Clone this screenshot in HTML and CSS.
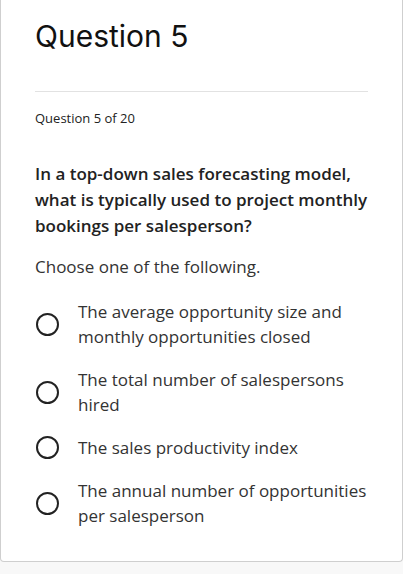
FILE: index.html
```html
<!DOCTYPE html>
<html lang="en">
<head>
    <meta charset="UTF-8">
    <meta name="viewport" content="width=device-width, initial-scale=1.0">
    <title>Question 5</title>
<link rel="stylesheet" href="styles.css">
</head>
<body>
    <div class="card">
        <h1 class="title">Question 5</h1>
        <div class="count">Question 5 of 20</div>

        <p class="prompt">In a top-down sales forecasting model, what is typically used to project monthly bookings per salesperson?</p>
        <p class="hint">Choose one of the following.</p>

        <ul class="options">
            <li class="option">
                <span class="radio"></span>
                <span class="label">The average opportunity size and monthly opportunities closed</span>
            </li>
            <li class="option">
                <span class="radio"></span>
                <span class="label">The total number of salespersons hired</span>
            </li>
            <li class="option">
                <span class="radio"></span>
                <span class="label">The sales productivity index</span>
            </li>
            <li class="option">
                <span class="radio"></span>
                <span class="label">The annual number of opportunities per salesperson</span>
            </li>
        </ul>
    </div>
</body>
</html>
```

FILE: styles.css
```css
body{
    margin: 0;
    background-color: #f8f8f8;
    font-family: "Open Sans", "Noto Sans", sans-serif;
    color: #222;
}
.card{
    background-color: #fff;
    border: 1px solid #cfcfcf;
    border-top: none;
    border-radius: 0 0 4px 4px;
    height: 562px;
    box-sizing: border-box;
    padding: 0 34px;
}
.title{
    margin: 0;
    padding: 18px 0 37px;
    font-family: Inter, "Liberation Sans", sans-serif;
    font-size: 30px;
    font-weight: 400;
    line-height: 36px;
    color: #111;
    border-bottom: 1px solid #e2e2e2;
}
.count{
    margin-top: 17px;
    font-size: 13px;
    line-height: 18px;
    color: #222;
}
.prompt{
    margin: 34px 0 0;
    font-size: 17px;
    font-weight: 600;
    line-height: 26px;
    color: #222;
}
.hint{
    margin: 16px 0 0;
    font-size: 17px;
    line-height: 24px;
    color: #333;
}
.options{
    list-style: none;
    margin: 20px 0 0;
    padding: 0;
}
.option{
    display: flex;
    align-items: center;
    gap: 19px;
    margin-bottom: 18px;
}
.radio{
    flex: none;
    width: 19px;
    height: 19px;
    margin-left: 1px;
    border: 2px solid #222;
    border-radius: 50%;
}
.label{
    font-size: 17px;
    line-height: 25px;
    color: #333;
}
```
